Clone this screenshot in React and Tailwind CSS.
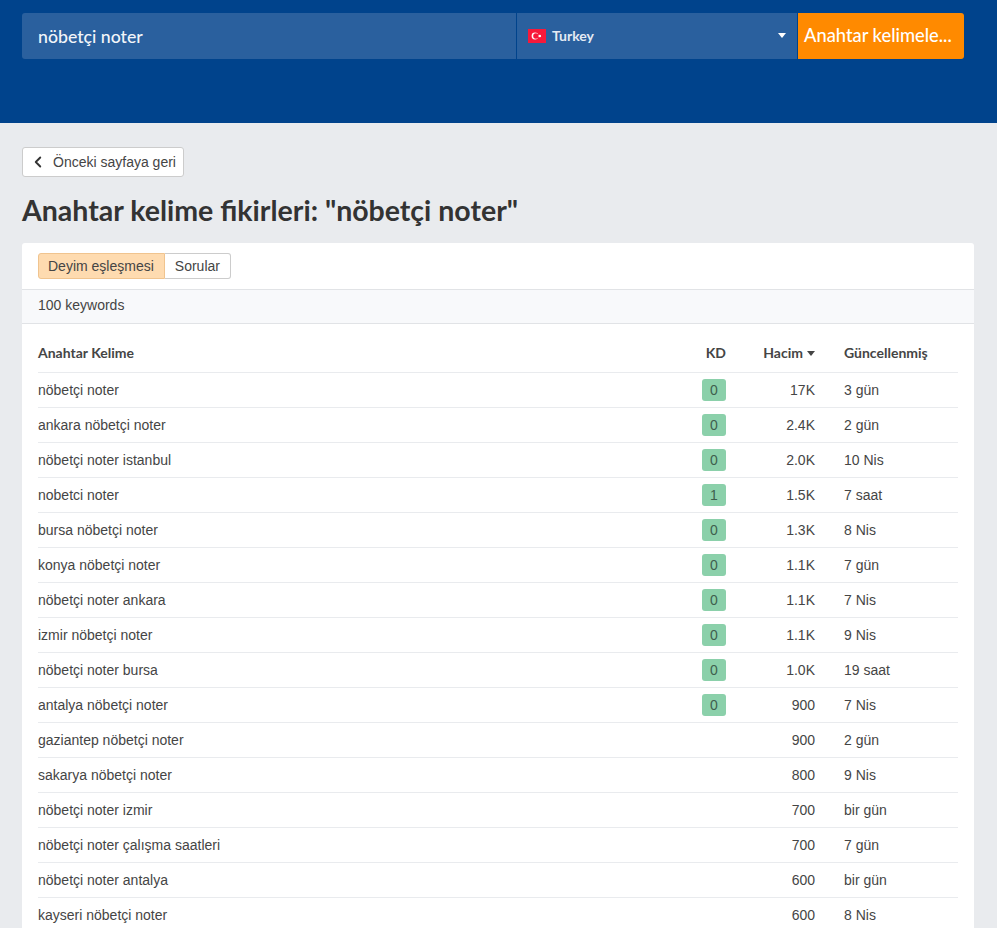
import React from "react";
import { ChevronLeft } from "lucide-react";

const rows = [
  ["nöbetçi noter", 0, "17K", "3 gün"],
  ["ankara nöbetçi noter", 0, "2.4K", "2 gün"],
  ["nöbetçi noter istanbul", 0, "2.0K", "10 Nis"],
  ["nobetci noter", 1, "1.5K", "7 saat"],
  ["bursa nöbetçi noter", 0, "1.3K", "8 Nis"],
  ["konya nöbetçi noter", 0, "1.1K", "7 gün"],
  ["nöbetçi noter ankara", 0, "1.1K", "7 Nis"],
  ["izmir nöbetçi noter", 0, "1.1K", "9 Nis"],
  ["nöbetçi noter bursa", 0, "1.0K", "19 saat"],
  ["antalya nöbetçi noter", 0, "900", "7 Nis"],
  ["gaziantep nöbetçi noter", null, "900", "2 gün"],
  ["sakarya nöbetçi noter", null, "800", "9 Nis"],
  ["nöbetçi noter izmir", null, "700", "bir gün"],
  ["nöbetçi noter çalışma saatleri", null, "700", "7 gün"],
  ["nöbetçi noter antalya", null, "600", "bir gün"],
  ["kayseri nöbetçi noter", null, "600", "8 Nis"],
];

// Turkish flag, drawn small
const Flag = () => (
  <svg width="18" height="14" viewBox="0 0 18 14" className="shrink-0">
    <rect width="18" height="14" fill="#f7193a" />
    <circle cx="7" cy="7" r="3.4" fill="#fff" />
    <circle cx="7.9" cy="7" r="2.7" fill="#f7193a" />
    <circle cx="11.8" cy="7" r="1.3" fill="#fff" />
  </svg>
);

const Row = ({ row }) => (
  <div className="flex h-[35px] items-center border-b border-[#e9ebee] text-[14px] text-[#454545]">
    <div className="flex-1">{row[0]}</div>
    <div className="flex w-[24px] justify-center">
      {row[1] !== null && (
        <span className="flex h-[22px] w-[24px] items-center justify-center rounded-[3px] bg-[#8bd0aa] text-[#3f5f4e]">
          {row[1]}
        </span>
      )}
    </div>
    <div className="w-[89px] text-right">{row[2]}</div>
    <div className="ml-[29px] w-[114px]">{row[3]}</div>
  </div>
);

const App = () => {
  return (
    <div className="h-screen overflow-hidden bg-[#e9ebee] font-['Liberation_Sans',sans-serif]">
      <div className="h-[123px] bg-[#00438c] px-[22px] pt-[13px]">
        <div className="flex h-[46px] w-[942px] font-['Lato',sans-serif]">
          <div className="flex w-[494px] items-center rounded-l-[3px] bg-[#2a609e] pl-[16px] pt-[2px] text-[17.7px] font-medium text-[#f2f5f9]">
            nöbetçi noter
          </div>
          <div className="ml-px flex w-[280px] items-center bg-[#2a609e] pb-[1px] pl-[11px] pr-[11px] text-[14px] font-bold text-[#e4eaf3]">
            <Flag />
            <span className="ml-[6px] flex-1">Turkey</span>
            <span className="h-0 w-0 border-x-[4px] border-t-[5px] border-x-transparent border-t-white" />
          </div>
          <div className="ml-px flex flex-1 items-center rounded-r-[3px] bg-[#ff8a00] pl-[6px] text-[18.3px] font-medium text-white">
            Anahtar kelimele...
          </div>
        </div>
      </div>

      <div className="pl-[22px] pr-[23px] pt-[24px]">
        <button className="flex h-[30px] w-[162px] items-center rounded-[3px] border border-[#ccc] bg-white pl-[6px] text-[14px] text-[#454545]">
          <ChevronLeft size={18} strokeWidth={2.5} className="text-[#333]" />
          <span className="ml-[6px]">Önceki sayfaya geri</span>
        </button>

        <h1 className="mt-[13px] font-['Lato',sans-serif] text-[28.5px] leading-[40px] font-bold text-[#333]">
          Anahtar kelime fikirleri: "nöbetçi noter"
        </h1>

        <div className="mt-[13px] rounded-t-[3px] bg-white">
          <div className="flex h-[47px] items-start border-b border-[#e1e3e6] pl-[16px] pt-[10px] text-[14px] text-[#454545]">
            <div className="flex h-[26px] items-center rounded-l-[3px] border border-[#f0c48f] bg-[#fedbb0] pl-[9px] pr-[10px]">
              Deyim eşleşmesi
            </div>
            <div className="flex h-[26px] items-center rounded-r-[3px] border border-l-0 border-[#ccc] bg-white pl-[10px] pr-[10px]">
              Sorular
            </div>
          </div>
          <div className="flex h-[34px] items-center border-b border-[#e1e3e6] bg-[#f8f9fb] pb-[2px] pl-[16px] text-[14px] text-[#454545]">
            100 keywords
          </div>
          <div className="px-[16px]">
            <div className="flex h-[49px] items-center border-b border-[#e9ebee] pt-[9px] font-['Lato',sans-serif] text-[14px] font-bold text-[#454545]">
              <div className="flex-1">Anahtar Kelime</div>
              <div className="w-[24px] text-right">KD</div>
              <div className="flex w-[89px] items-center justify-end">
                Hacim
                <span className="ml-[4px] mt-[2px] h-0 w-0 border-x-[4px] border-t-[5px] border-x-transparent border-t-[#454545]" />
              </div>
              <div className="ml-[29px] w-[114px]">Güncellenmiş</div>
            </div>
            {rows.map((row) => (
              <Row key={row[0]} row={row} />
            ))}
          </div>
        </div>
      </div>
    </div>
  );
};

export default App;
